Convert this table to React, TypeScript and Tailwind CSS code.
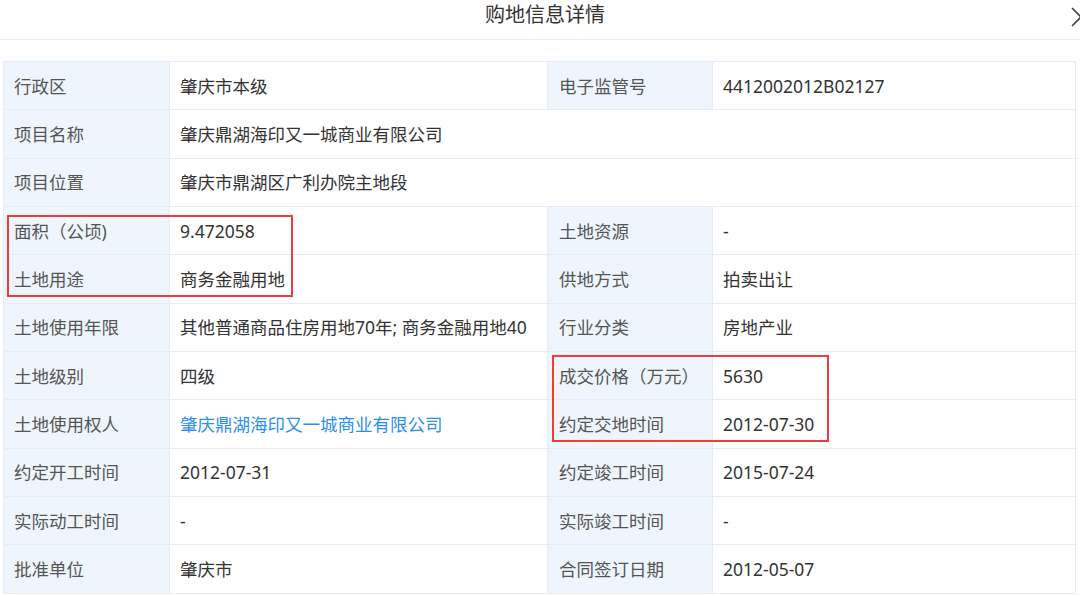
import React from "react";

type Row = {
  l1: string;
  v1: string;
  l2?: string;
  v2?: string;
  link?: boolean;
};

const rows: Row[] = [
  { l1: "行政区", v1: "肇庆市本级", l2: "电子监管号", v2: "4412002012B02127" },
  { l1: "项目名称", v1: "肇庆鼎湖海印又一城商业有限公司" },
  { l1: "项目位置", v1: "肇庆市鼎湖区广利办院主地段" },
  { l1: "面积（公顷)", v1: "9.472058", l2: "土地资源", v2: "-" },
  { l1: "土地用途", v1: "商务金融用地", l2: "供地方式", v2: "拍卖出让" },
  { l1: "土地使用年限", v1: "其他普通商品住房用地70年; 商务金融用地40", l2: "行业分类", v2: "房地产业" },
  { l1: "土地级别", v1: "四级", l2: "成交价格（万元）", v2: "5630" },
  { l1: "土地使用权人", v1: "肇庆鼎湖海印又一城商业有限公司", l2: "约定交地时间", v2: "2012-07-30", link: true },
  { l1: "约定开工时间", v1: "2012-07-31", l2: "约定竣工时间", v2: "2015-07-24" },
  { l1: "实际动工时间", v1: "-", l2: "实际竣工时间", v2: "-" },
  { l1: "批准单位", v1: "肇庆市", l2: "合同签订日期", v2: "2012-05-07" },
];

export default function App() {
  return (
    <div
      className="relative w-[1080px] h-[596px] overflow-hidden bg-white text-[#333]"
      style={{ fontFamily: '"Noto Sans", "Noto Sans CJK SC", sans-serif' }}
    >
      <div className="relative h-[40px] border-b border-[#ececec] flex justify-center pl-[10px]">
        <span className="text-[20px] leading-none pt-[5px] text-[#333]">购地信息详情</span>
        <svg
          className="absolute right-[-4px] top-[6px]"
          width="14"
          height="22"
          viewBox="0 0 14 22"
          fill="none"
          stroke="#444"
          strokeWidth="1.6"
        >
          <path d="M2 2 L11 11 L2 20" />
        </svg>
      </div>

      <div className="ml-[3px] mt-[21px] w-[1073px] border-t border-r border-[#e3ecf7] text-[17.5px]">
        {rows.map((r, i) => (
          <div
            key={i}
            className="grid grid-cols-[166px_378px_165px_363px] h-[48.35px] border-b border-[#e3ecf7]"
          >
            <div className="bg-[#eef5fc] border-l border-[#e3ecf7] pl-[10px] flex items-center text-[#555] whitespace-nowrap">
              {r.l1}
            </div>
            {r.l2 ? (
              <>
                <div
                  className={`border-l border-[#e3ecf7] pl-[10px] flex items-center whitespace-nowrap ${
                    r.link ? "text-[#2b8ff0]" : "text-[#333]"
                  }`}
                >
                  {r.v1}
                </div>
                <div className="bg-[#eef5fc] border-l border-[#e3ecf7] pl-[11px] flex items-center text-[#555] whitespace-nowrap">
                  {r.l2}
                </div>
                <div className="border-l border-[#e3ecf7] pl-[10px] flex items-center text-[#333] whitespace-nowrap">
                  {r.v2}
                </div>
              </>
            ) : (
              <div className="col-span-3 border-l border-[#e3ecf7] pl-[10px] flex items-center text-[#333] whitespace-nowrap">
                {r.v1}
              </div>
            )}
          </div>
        ))}
      </div>

      <div className="absolute left-[7px] top-[215px] w-[286px] h-[82px] border-2 border-[#f03c3c]" />
      <div className="absolute left-[552px] top-[355px] w-[277px] h-[87px] border-2 border-[#f03c3c]" />
    </div>
  );
}
